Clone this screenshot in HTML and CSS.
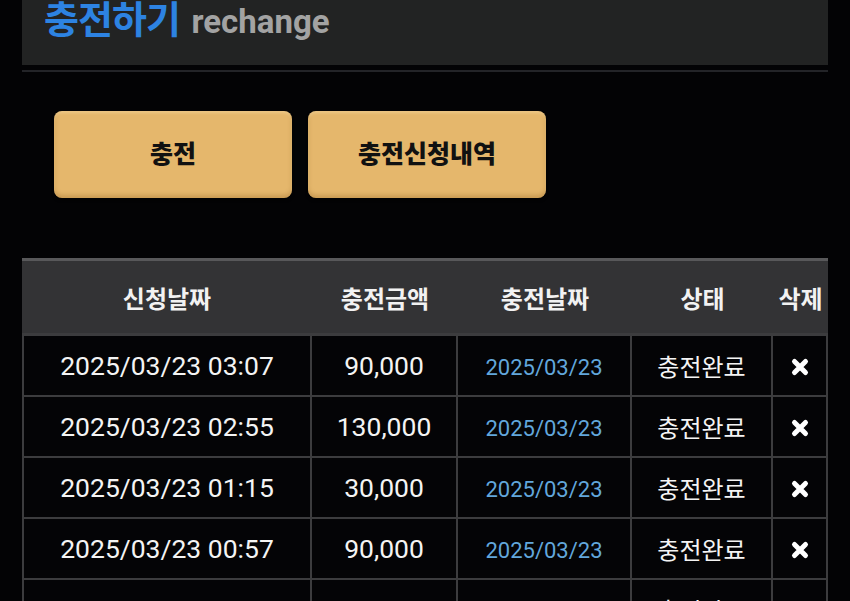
FILE: index.html
```html
<!DOCTYPE html>
<html lang="ko">
<head>
<meta charset="utf-8">
<title>충전하기</title>
<link rel="stylesheet" href="styles.css">
</head>
<body>
<div class="wrap">
  <div class="page-head">
    <h1><span class="ko">충전하기</span> <span class="en">rechange</span></h1>
  </div>
  <div class="head-rule"></div>

  <div class="tabs">
    <button class="tab">충전</button>
    <button class="tab">충전신청내역</button>
  </div>

  <table class="history">
    <thead>
      <tr>
        <th class="c-req">신청날짜</th>
        <th class="c-amt">충전금액</th>
        <th class="c-date">충전날짜</th>
        <th class="c-state">상태</th>
        <th class="c-del">삭제</th>
      </tr>
    </thead>
    <tbody>
      <tr>
        <td class="num">2025/03/23 03:07</td>
        <td class="num">90,000</td>
        <td class="done-date">2025/03/23</td>
        <td class="state">충전완료</td>
        <td><svg class="del" viewBox="0 0 20 20"><path d="M4.5 4.5L15.5 15.5M15.5 4.5L4.5 15.5"/></svg></td>
      </tr>
      <tr>
        <td class="num">2025/03/23 02:55</td>
        <td class="num">130,000</td>
        <td class="done-date">2025/03/23</td>
        <td class="state">충전완료</td>
        <td><svg class="del" viewBox="0 0 20 20"><path d="M4.5 4.5L15.5 15.5M15.5 4.5L4.5 15.5"/></svg></td>
      </tr>
      <tr>
        <td class="num">2025/03/23 01:15</td>
        <td class="num">30,000</td>
        <td class="done-date">2025/03/23</td>
        <td class="state">충전완료</td>
        <td><svg class="del" viewBox="0 0 20 20"><path d="M4.5 4.5L15.5 15.5M15.5 4.5L4.5 15.5"/></svg></td>
      </tr>
      <tr>
        <td class="num">2025/03/23 00:57</td>
        <td class="num">90,000</td>
        <td class="done-date">2025/03/23</td>
        <td class="state">충전완료</td>
        <td><svg class="del" viewBox="0 0 20 20"><path d="M4.5 4.5L15.5 15.5M15.5 4.5L4.5 15.5"/></svg></td>
      </tr>
      <tr>
        <td class="num">2025/03/22 21:07</td>
        <td class="num">150,000</td>
        <td class="done-date">2025/03/22</td>
        <td class="state">충전완료</td>
        <td><svg class="del" viewBox="0 0 20 20"><path d="M4.5 4.5L15.5 15.5M15.5 4.5L4.5 15.5"/></svg></td>
      </tr>
    </tbody>
  </table>
</div>
</body>
</html>
```

FILE: styles.css
```css
body {
  margin: 0;
  background: #030305;
  color: #fff;
  font-family: Roboto, "Noto Sans CJK KR", sans-serif;
}

.wrap {
  width: 806px;
  margin-left: 22px;
}

/* title bar */
.page-head {
  background: #222323;
  height: 65px;
}

.page-head h1 {
  margin: 0 0 0 22px;
  line-height: 33px;
  font-size: 38px;
  font-weight: 700;
  font-family: "Noto Sans CJK KR", sans-serif;
  white-space: nowrap;
}

.page-head .ko {
  color: #2d83e2;
  letter-spacing: -1px;
}

.page-head .en {
  color: #a3a3a3;
  font-family: Roboto, sans-serif;
  font-size: 33px;
  margin-left: 1px;
}

.head-rule {
  height: 2px;
  margin-top: 5px;
  background: #232428;
}

/* tab buttons */
.tabs {
  display: flex;
  gap: 16px;
  padding-left: 32px;
  margin-top: 39px;
}

.tab {
  width: 238px;
  height: 87px;
  padding: 0 0 5px;
  border: 0;
  border-radius: 8px;
  background: #e5b76c;
  box-shadow: inset 0 -3px 4px rgba(120, 70, 10, .25), inset 0 2px 3px rgba(255, 235, 190, .35), 0 2px 3px rgba(0, 0, 0, .6);
  color: #111;
  font-family: "Noto Sans CJK KR", sans-serif;
  font-size: 25px;
  font-weight: 900;
  cursor: pointer;
}

/* history table */
.history {
  width: 806px;
  margin-top: 60px;
  border-collapse: separate;
  border-spacing: 0;
  table-layout: fixed;
}

.history th {
  box-sizing: border-box;
  height: 75px;
  padding: 0;
  background: #333335;
  border-top: 3px solid #58585a;
  color: #f2f2f2;
  font-family: "Noto Sans CJK KR", sans-serif;
  font-size: 24px;
  font-weight: 700;
}

.history .c-req { width: 290px; }
.history .c-amt { width: 146px; }
.history .c-date { width: 174px; }
.history .c-state { width: 141px; }
.history .c-del { width: 55px; }

.history td {
  box-sizing: border-box;
  height: 61px;
  padding: 0;
  background: #040406;
  border-top: 2px solid #3c3c3e;
  border-right: 2px solid #3c3c3e;
  text-align: center;
  vertical-align: middle;
}

.history td:first-child {
  border-left: 2px solid #3c3c3e;
}

.history tbody tr:first-child td {
  border-top-width: 3px;
  height: 62px;
}

.history .num {
  font-size: 26.5px;
  color: #f4f4f4;
}

.history .done-date {
  font-size: 22px;
  color: #62a7dc;
  padding-top: 3px;
}

.history .state {
  font-family: "Noto Sans CJK KR", sans-serif;
  font-size: 24px;
  color: #f4f4f4;
}

.del {
  display: block;
  width: 20px;
  height: 20px;
  margin: 3px auto 0;
  fill: none;
  stroke: #fff;
  stroke-width: 5;
  stroke-linecap: round;
}
```
